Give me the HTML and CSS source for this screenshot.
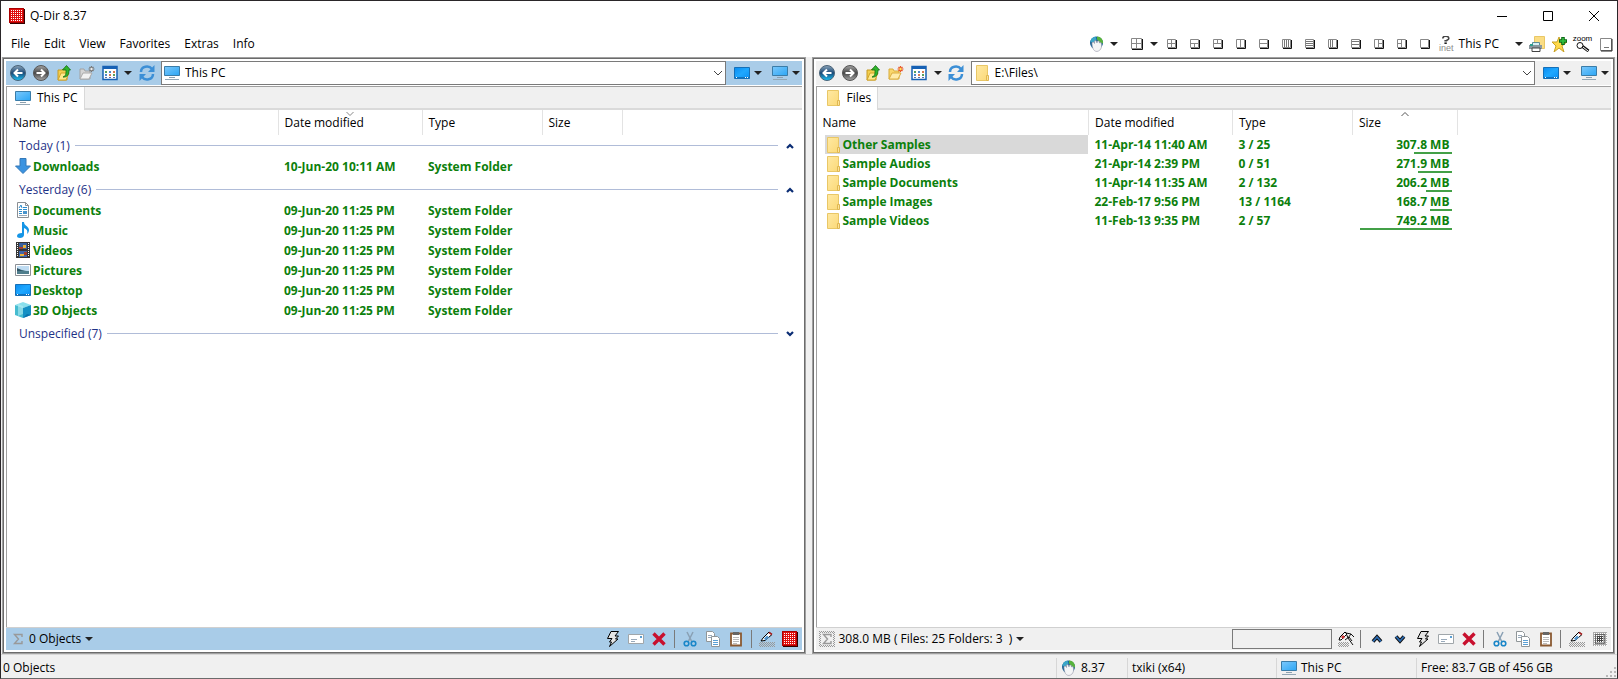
FILE: index.html
```html
<!DOCTYPE html>
<html lang="en">
<head>
	<meta charset="utf-8">
	<title>Q-Dir 8.37</title>
	<meta name="viewport" content="width=device-width, initial-scale=1.0">
	<link rel="stylesheet" href="styles.css">
</head>
<body>

<!-- icon sprite -->
<svg class="sprite" aria-hidden="true">
	<defs>
		<linearGradient id="g-blue" x1="0" y1="0" x2="1" y2="1">
			<stop offset="0" stop-color="#7cc8fb"/><stop offset="1" stop-color="#2ba6f5"/>
		</linearGradient>
		<linearGradient id="g-desk" x1="0" y1="0" x2="1" y2="1">
			<stop offset="0" stop-color="#0a8cf0"/><stop offset="0.5" stop-color="#1fa8ff"/><stop offset="1" stop-color="#0a90f5"/>
		</linearGradient>
		<linearGradient id="g-folder" x1="0" y1="0" x2="1" y2="1">
			<stop offset="0" stop-color="#ffe9a3"/><stop offset="1" stop-color="#fbd978"/>
		</linearGradient>
		<linearGradient id="g-back" x1="0" y1="0" x2="0" y2="1">
			<stop offset="0" stop-color="#8ba3b8"/><stop offset="0.5" stop-color="#1a4a78"/><stop offset="1" stop-color="#19c4f8"/>
		</linearGradient>
		<linearGradient id="g-fwd" x1="0" y1="0" x2="0" y2="1">
			<stop offset="0" stop-color="#a5a5a5"/><stop offset="0.5" stop-color="#484848"/><stop offset="1" stop-color="#a8a8a8"/>
		</linearGradient>
		<pattern id="p-dots" width="2" height="2" patternUnits="userSpaceOnUse">
			<rect width="1" height="1" fill="#fff"/>
		</pattern>
		<pattern id="p-gray" width="2" height="2" patternUnits="userSpaceOnUse">
			<rect width="1" height="1" fill="#999"/><rect x="1" y="1" width="1" height="1" fill="#999"/>
		</pattern>
	</defs>

	<symbol id="i-app" viewBox="0 0 16 16">
		<path d="M1 1h15v15H1z" fill="#300"/><path d="M0 0h15v15H0z" fill="#e00f0f"/>
		<path d="M.5.5h14v14H.5z" fill="none" stroke="#a00"/>
		<path d="M2 2.500h11M2 12.500h11M2.500 2v11M12.500 2v11" stroke="#fff" stroke-dasharray="1 1"/>
		<path d="M4 4h7v7H4z" fill="url(#p-dots)"/>
	</symbol>
	<symbol id="i-appgray" viewBox="0 0 16 16">
		<path d="M1 1h14v14H1z" fill="#aaa"/>
		<path d="M1 1h14v14H1z" fill="url(#p-dots)"/>
		<path d="M3.500 3.500h9v9h-9z" fill="none" stroke="#222" stroke-dasharray="1 1"/>
		<path d="M5 5h6v6H5z" fill="#444"/><path d="M5 5h6v6H5z" fill="url(#p-dots)"/>
	</symbol>
	<symbol id="i-pc" viewBox="0 0 16 16">
		<path d="M.5 1.500h15v9H.5z" fill="url(#g-blue)" stroke="#3a7ca8"/>
		<path d="M5 12.500h6" stroke="#8da0ae"/><path d="M1 14.500h14" stroke="#93a7b5"/>
	</symbol>
	<symbol id="i-desktop" viewBox="0 0 16 16">
		<path d="M.5 2.500h15v11H.5z" fill="url(#g-desk)" stroke="#1570b8"/>
		<path d="M1 12h14v1H1z" fill="#1173bd"/><path d="M2 12.500h1M11 12.500h1M13 12.500h1" stroke="#fff"/>
	</symbol>
	<symbol id="i-folder" viewBox="0 0 16 16">
		<path d="M2.500.5h11v15h-11z" fill="url(#g-folder)" stroke="#e9c766"/>
		<path d="M12.500 10.500h2v5h-2z" fill="#fde398" stroke="#dfb751"/>
	</symbol>
	<symbol id="i-back" viewBox="0 0 16 16">
		<circle cx="8" cy="8" r="7.500" fill="url(#g-back)" stroke="#4a6378"/>
		<path d="M12.500 8H5M8 4.500 4.500 8 8 11.500" fill="none" stroke="#fff" stroke-width="2"/>
	</symbol>
	<symbol id="i-fwd" viewBox="0 0 16 16">
		<circle cx="8" cy="8" r="7.500" fill="url(#g-fwd)" stroke="#555"/>
		<path d="M3.500 8H11M8 4.500 11.500 8 8 11.500" fill="none" stroke="#fff" stroke-width="2"/>
	</symbol>
	<symbol id="i-up" viewBox="0 0 16 16">
		<path d="M2 5h4l1-1h4v11H2z" fill="#f3cf4f" stroke="#c79a22"/>
		<path d="m2 15 3-7h8l-3 7z" fill="#ffe98c" stroke="#d2a52c"/>
		<path d="M7 12c3-1 3-3 3-7H6.500l4-4.500 4 4.500H13c0 5-2 7.500-6 7z" fill="#2fb52c" stroke="#126b12" stroke-width=".8"/>
	</symbol>
	<symbol id="i-newfolder" viewBox="0 0 16 16">
		<path d="M1 14V4h4l1 2h5v8z" fill="#f9d66c" stroke="#d9ac3b"/>
		<path d="m1 14 3-6h9l-3 6z" fill="#ffebaa" stroke="#dcae40"/>
		<path d="M12.500 1v6M9.500 4h6M10.500 2l4 4M14.500 2l-4 4" stroke="#e8532a" stroke-width="1.200"/><circle cx="12.500" cy="4" r="1.200" fill="#ffe25a"/>
	</symbol>
	<symbol id="i-newfolder-off" viewBox="0 0 16 16">
		<path d="M1 14V4h4l1 2h5v8z" fill="#d4d4d4" stroke="#a2a2a2"/>
		<path d="m1 14 3-6h9l-3 6z" fill="#f2f2f2" stroke="#aaa"/>
		<path d="M12.500 1v6M9.500 4h6M10.500 2l4 4M14.500 2l-4 4" stroke="#777" stroke-width="1.200"/><circle cx="12.500" cy="4" r="1.200" fill="#eee"/>
	</symbol>
	<symbol id="i-views" viewBox="0 0 16 16">
		<path d="M1 1.500h14v13H1z" fill="#fff" stroke="#1761b4" stroke-width="1.500"/><path d="M1 1h14v3H1z" fill="#1761b4"/>
		<path d="M3 6h2v2H3zM11 9h2v2h-2z" fill="#58a05c"/><path d="M7 6h2v2H7zM3 9h2v2H3z" fill="#4e8ac9"/><path d="M11 6h2v2h-2zM7 9h2v2H7z" fill="#d77a50"/><path d="M3 12h2v1H3zM7 12h2v1H7zM11 12h2v1h-2z" fill="#5b6ea8"/>
	</symbol>
	<symbol id="i-refresh" viewBox="0 0 16 16">
		<path d="M2 7c0-6 8-7 11-3" fill="none" stroke="#3c8fd6" stroke-width="2.500"/><path d="M15.500 0v7H9z" fill="#3c8fd6"/>
		<path d="M14 9c0 6-8 7-11 3" fill="none" stroke="#3c8fd6" stroke-width="2.500"/><path d="M.5 16V9H7z" fill="#3c8fd6"/>
	</symbol>
	<symbol id="i-caret" viewBox="0 0 8 8"><path d="M0 2h8L4 6z" fill="#222"/></symbol>
	<symbol id="i-chev" viewBox="0 0 8 8"><path d="m0 2 4 4 4-4" fill="none" stroke="#444"/></symbol>
	<symbol id="i-sortup" viewBox="0 0 8 4"><path d="m.5 4 3.500-3.500L7.500 4" fill="none" stroke="#555"/></symbol>
	<symbol id="i-sortdown" viewBox="0 0 8 4"><path d="M.5 0 4 3.500 7.500 0" fill="none" stroke="#888"/></symbol>
	<symbol id="i-collapse" viewBox="0 0 8 8"><path d="M1 6 4 3l3 3" fill="none" stroke="#0b2d74" stroke-width="2.200"/></symbol>
	<symbol id="i-expand" viewBox="0 0 8 8"><path d="m1 2 3 3 3-3" fill="none" stroke="#0b2d74" stroke-width="2.200"/></symbol>
	<symbol id="i-prev" viewBox="0 0 16 16"><path d="M4 10.500 8 6l4 4.500" fill="none" stroke="#111" stroke-width="3.600"/><path d="M4 10.500 8 6l4 4.500" fill="none" stroke="#2b6cb4" stroke-width="1.800"/></symbol>
	<symbol id="i-next" viewBox="0 0 16 16"><path d="M4 5.500 8 10l4-4.500" fill="none" stroke="#111" stroke-width="3.600"/><path d="M4 5.500 8 10l4-4.500" fill="none" stroke="#2b6cb4" stroke-width="1.800"/></symbol>

	<symbol id="i-download" viewBox="0 0 16 16"><path d="M5 .5h6V8h4.500L8 15.500.5 8H5z" fill="#3b93e0" stroke="#3479b8"/></symbol>
	<symbol id="i-doc" viewBox="0 0 16 16">
		<path d="M2.500.5h8l3 3v12h-11z" fill="#fff" stroke="#8a8f94"/><path d="M10.500.5v3h3" fill="none" stroke="#8a8f94"/>
		<path d="m4 6 2-3 1 3M4 7.500h3M8 5.500h4M8 7.500h4M4 9.500h3M4 11.500h3" fill="none" stroke="#2d8ccd"/><path d="M8 9h4v3H8z" fill="#4894cc"/><path d="M4 13.500h8" stroke="#9ab"/>
	</symbol>
	<symbol id="i-music" viewBox="0 0 16 16"><path d="M7 0h2c0 4 5 4 5 8 0 2-1 3-2 4 1-3 0-5-3-6v7c0 2-2 3-4 3s-3-1-3-2c0-2 2-3 5-3z" fill="#1595e6"/></symbol>
	<symbol id="i-video" viewBox="0 0 16 16">
		<path d="M1 0h14v16H1z" fill="#363636"/><path d="M2.500 1v14M13.500 1v14" stroke="#fff" stroke-dasharray="1 1"/>
		<path d="M4 1h8v6H4z" fill="#3a5f9c"/><path d="M4 9h8v6H4z" fill="#3c66ab"/><path d="M8 3h3v3H8zM5 12h4v2H5z" fill="#e8b33c"/><path d="M4 5h4v2H4zM9 10h3v3H9z" fill="#a33d2e"/>
	</symbol>
	<symbol id="i-picture" viewBox="0 0 16 16">
		<path d="M.5 2.500h15v11H.5z" fill="#fff" stroke="#8b9096"/><path d="M2 4h12v8H2z" fill="#bfdcf2"/><path d="M2 7c4 0 6 2 12 2v3H2z" fill="#4f7d8c"/><path d="M2 6c3 1 5 3 7 3H2z" fill="#2f5566"/>
	</symbol>
	<symbol id="i-cube" viewBox="0 0 16 16">
		<path d="m0 3 8-3 8 3-8 3z" fill="#8adfec"/><path d="M0 3v10l8 3V6z" fill="#46bcd0"/><path d="M16 3v10l-8 3V6z" fill="#1590c4"/><path d="m3 2 5 2v8l-5 2z" fill="#b4ecf4" opacity=".6"/><path d="m8 16 4-4 4 1z" fill="#0870ac"/>
	</symbol>

	<symbol id="i-globe" viewBox="0 0 16 16">
		<circle cx="7.500" cy="7" r="6.500" fill="#1d6396"/><path d="M8 .5c4 0 6.500 3.500 6 7l-3-1-3-3z" fill="#57b23c"/><path d="M1.500 6c0-3 2-5 5-5.500l1 3-3 3z" fill="#3aa6c8"/>
		<path d="M3 6.500 4.500 6l1 1.500V5L7 4.500 8 7l.5-2L10 5l.5 2L12 6.500c1 3 1 8-4 9-4 0-5-5-5-9z" fill="#f4f5f6" stroke="#99a" stroke-width=".6"/>
	</symbol>
	<symbol id="i-question" viewBox="0 0 10 10">
		<path d="M1 3c0-3.500 7.500-3.500 7.500 0 0 2-3 2-3 3H3" fill="none" stroke="#444" stroke-width="2"/><path d="M3 8h3v2H3z" fill="#222"/>
	</symbol>
	<symbol id="i-printer" viewBox="0 0 16 16">
		<path d="M5.500.5h10v12h-10z" fill="#fbdd83" stroke="#e9c766"/><path d="M3.500 6.500h7v4h-7z" fill="#d8f0f2" stroke="#5d8d96"/><path d="M0 9h13v4H0z" fill="#8b979e"/><path d="M3 12h8v3.500H3z" fill="#fff" stroke="#444"/><path d="M1 8h3v2H1z" fill="#2d9c8e"/>
	</symbol>
	<symbol id="i-star" viewBox="0 0 16 16">
		<path d="m7 1 2 5h6l-5 4 2 6-5-4-5 4 2-6-4-4h5z" fill="#ffd94a" stroke="#c9a227"/><path d="M11 1v8M7 5h8" stroke="#0e6b18" stroke-width="3.600"/><path d="M11 2v6M8 5h6" stroke="#35c23f" stroke-width="1.600"/>
	</symbol>
	<symbol id="i-lens" viewBox="0 0 14 10">
		<circle cx="4" cy="3.500" r="3" fill="#fff" stroke="#111"/><path d="m6.500 4.500 6 4.500" stroke="#111" stroke-width="3"/><path d="m7 5 5 4" stroke="#fff"/>
	</symbol>
	<symbol id="i-tray" viewBox="0 0 16 16"><path d="M2.500 2.500h11v12h-11z" fill="#fff" stroke="#888"/><path d="M3 15h11V3" fill="none" stroke="#222"/><path d="M6 11.500h5" stroke="#777"/></symbol>

	<!-- pane layouts -->
	<symbol id="l-box" viewBox="0 0 12 12"><path d="M1.500 1.500h8v8h-8z" fill="#fff" stroke="#888"/><path d="M2 10.500h8.500V2" fill="none" stroke="#111"/></symbol>
	<symbol id="l-4" viewBox="0 0 12 12"><use href="#l-box"/><path d="M5.500 2v7M2 5.500h7" stroke="#888"/></symbol>
	<symbol id="l-4big" viewBox="0 0 14 14"><path d="M1.500 1.500h10v10h-10zM6.500 2v9M2 6.500h9" fill="#fff" stroke="#888"/><path d="M2 12.500h10.500V2" fill="none" stroke="#111"/></symbol>
	<symbol id="l-3b" viewBox="0 0 12 12"><use href="#l-box"/><path d="M2 5.500h7M5.500 6v3" stroke="#888"/></symbol>
	<symbol id="l-3t" viewBox="0 0 12 12"><use href="#l-box"/><path d="M2 5.500h7M5.500 2v3" stroke="#888"/></symbol>
	<symbol id="l-2v" viewBox="0 0 12 12"><use href="#l-box"/><path d="M5.500 2v7" stroke="#888"/></symbol>
	<symbol id="l-2h" viewBox="0 0 12 12"><use href="#l-box"/><path d="M2 5.500h7" stroke="#888"/></symbol>
	<symbol id="l-4v" viewBox="0 0 12 12"><use href="#l-box"/><path d="M3.500 2v7M5.500 2v7M7.500 2v7" stroke="#777"/></symbol>
	<symbol id="l-4h" viewBox="0 0 12 12"><use href="#l-box"/><path d="M2 3.500h7M2 5.500h7M2 7.500h7" stroke="#777"/></symbol>
	<symbol id="l-3v" viewBox="0 0 12 12"><use href="#l-box"/><path d="M3.500 2v7M5.500 2v7" stroke="#777"/></symbol>
	<symbol id="l-3h" viewBox="0 0 12 12"><use href="#l-box"/><path d="M2 3.500h7M2 6.500h7" stroke="#777"/></symbol>
	<symbol id="l-3r" viewBox="0 0 12 12"><use href="#l-box"/><path d="M5.500 2v7M6 5.500h3" stroke="#888"/></symbol>
	<symbol id="l-3l" viewBox="0 0 12 12"><use href="#l-box"/><path d="M5.500 2v7M2 5.500h3" stroke="#888"/></symbol>

	<!-- pane footer -->
	<symbol id="i-flash" viewBox="0 0 16 16"><path d="M6 .5h7.500L10 5h3.500l-3 3H13l-8.500 7.500L6.500 11H4.500L7 7.500H2.500z" fill="#e4e4e4" stroke="#000"/></symbol>
	<symbol id="i-mail" viewBox="0 0 16 16"><path d="M.5 3.500h15v9H.5z" fill="#fff" stroke="#a0a6aa"/><path d="M3 8.500h6M3 10.500h4" stroke="#9ab"/><path d="M12 5h2v2h-2z" fill="#5a9fd4"/></symbol>
	<symbol id="i-del" viewBox="0 0 16 16"><path d="m2.500 2.500 11 11M13.500 2.500l-11 11" stroke="#c8102e" stroke-width="3.400"/></symbol>
	<symbol id="i-cut" viewBox="0 0 16 16"><path d="m5 1 5 10M11 1 6 11" stroke="#8aa0b4" stroke-width="1.500"/><circle cx="4.500" cy="12.500" r="2.300" fill="none" stroke="#1a86c8" stroke-width="1.600"/><circle cx="11.500" cy="12.500" r="2.300" fill="none" stroke="#1a86c8" stroke-width="1.600"/></symbol>
	<symbol id="i-copy" viewBox="0 0 16 16"><path d="M1.500.5h6l2 2v8h-8z" fill="#fff" stroke="#909699"/><path d="M3 4.500h4M3 6.500h4" stroke="#9ab"/><path d="M6.500 5.500h6l2 2v8h-8z" fill="#fff" stroke="#909699"/><path d="M8 9.500h5M8 11.500h5M8 13.500h5" stroke="#5a9fd4"/></symbol>
	<symbol id="i-paste" viewBox="0 0 16 16"><path d="M3 2.500h10v12H3z" fill="#fff" stroke="#8a5a32" stroke-width="1.800"/><path d="M5 1h6v3H5z" fill="#666"/><path d="M5 6.500h6M5 8.500h6M5 10.500h6M5 12.500h4" stroke="#bbb"/></symbol>
	<symbol id="i-pen" viewBox="0 0 16 16"><path d="M0 11h16v5H0z" fill="url(#p-gray)"/><path d="m2 10 2-3 6-6 3 2.500-7 6z" fill="#fff" stroke="#000"/><path d="m5 7.500 3-3 2 2-3.500 3z" fill="#4f93cc"/><path d="m10 1.500 3 2" stroke="#a22" stroke-width="1.600"/></symbol>
	<symbol id="i-pens" viewBox="0 0 16 16"><path d="M0 11h11v5H0z" fill="url(#p-gray)"/><path d="m1 9 1-3 5-5 2 2-6 6z" fill="#fff" stroke="#000"/><path d="m3 6 2-2 2 2-2 2z" fill="#c33"/><path d="m8 2 5 1-3 4zM10 7l5 7M7 9l4-3 3 4M13 3l3 3" fill="none" stroke="#111"/></symbol>
	<symbol id="i-sigma" viewBox="0 0 16 16"><path d="M12 6V3.500H4.500L8.500 8l-4 4.500H12V10" fill="none" stroke="#999" stroke-width="1.400"/></symbol>
	<symbol id="i-sigmabox" viewBox="0 0 16 16"><path d="M1 1h14v14H1z" fill="none" stroke="url(#p-gray)" stroke-width="2"/><use href="#i-sigma"/></symbol>
</svg>

<div class="window">
	<header class="titlebar">
		<svg class="icon titlebar__icon"><use href="#i-app"/></svg>
		<h1 class="titlebar__title">Q-Dir 8.37</h1>
		<button class="winbtn" aria-label="Minimize"><svg width="10" height="10"><path d="M0 5.500h10" stroke="#000"/></svg></button>
		<button class="winbtn" aria-label="Maximize"><svg width="10" height="10"><path d="M.5.5h9v9h-9z" fill="none" stroke="#000"/></svg></button>
		<button class="winbtn" aria-label="Close"><svg width="10" height="10"><path d="m0 0 10 10M10 0 0 10" stroke="#000"/></svg></button>
	</header>

	<div class="menubar">
		<nav class="menu">
			<button class="menu__item">File</button>
			<button class="menu__item">Edit</button>
			<button class="menu__item">View</button>
			<button class="menu__item">Favorites</button>
			<button class="menu__item">Extras</button>
			<button class="menu__item">Info</button>
		</nav>
		<div class="quickbar">
			<button class="tool" aria-label="Language"><svg class="icon"><use href="#i-globe"/></svg></button>
			<button class="drop" aria-label="Language list"><svg class="caret"><use href="#i-caret"/></svg></button>
			<button class="tool tool--big" aria-label="Layout"><svg class="layout--big"><use href="#l-4big"/></svg></button>
			<button class="drop" aria-label="Layout list"><svg class="caret"><use href="#i-caret"/></svg></button>
			<button class="tool" aria-label="Four panes"><svg class="layout"><use href="#l-4"/></svg></button>
			<button class="tool" aria-label="Three panes, split bottom"><svg class="layout"><use href="#l-3b"/></svg></button>
			<button class="tool" aria-label="Three panes, split top"><svg class="layout"><use href="#l-3t"/></svg></button>
			<button class="tool" aria-label="Two columns"><svg class="layout"><use href="#l-2v"/></svg></button>
			<button class="tool" aria-label="Two rows"><svg class="layout"><use href="#l-2h"/></svg></button>
			<button class="tool" aria-label="Four columns"><svg class="layout"><use href="#l-4v"/></svg></button>
			<button class="tool" aria-label="Four rows"><svg class="layout"><use href="#l-4h"/></svg></button>
			<button class="tool" aria-label="Three columns"><svg class="layout"><use href="#l-3v"/></svg></button>
			<button class="tool" aria-label="Three rows"><svg class="layout"><use href="#l-3h"/></svg></button>
			<button class="tool" aria-label="Three panes, split right"><svg class="layout"><use href="#l-3r"/></svg></button>
			<button class="tool" aria-label="Three panes, split left"><svg class="layout"><use href="#l-3l"/></svg></button>
			<button class="tool" aria-label="One pane"><svg class="layout"><use href="#l-box"/></svg></button>
			<button class="tool tool--text"><span class="stack stack--inet"><svg width="10" height="8"><use href="#i-question"/></svg>inet</span>This PC</button>
			<button class="drop" aria-label="Places"><svg class="caret"><use href="#i-caret"/></svg></button>
			<button class="tool" aria-label="Print"><svg class="icon"><use href="#i-printer"/></svg></button>
			<button class="tool" aria-label="Add favorite"><svg class="icon"><use href="#i-star"/></svg></button>
			<button class="tool"><span class="stack stack--zoom">zoom<svg width="14" height="10"><use href="#i-lens"/></svg></span></button>
			<button class="tool" aria-label="To tray"><svg class="icon"><use href="#i-tray"/></svg></button>
		</div>
	</div>

	<main class="panes">
		<!-- left pane -->
		<section class="pane pane--active">
			<div class="pane__bar">
				<button class="tool" aria-label="Back"><svg class="icon"><use href="#i-back"/></svg></button>
				<button class="tool" aria-label="Forward"><svg class="icon"><use href="#i-fwd"/></svg></button>
				<button class="tool" aria-label="Up"><svg class="icon"><use href="#i-up"/></svg></button>
				<button class="tool" aria-label="New folder" disabled><svg class="icon"><use href="#i-newfolder-off"/></svg></button>
				<button class="tool" aria-label="Views"><svg class="icon"><use href="#i-views"/></svg></button>
				<button class="drop drop--views" aria-label="View list"><svg class="caret"><use href="#i-caret"/></svg></button>
				<button class="tool" aria-label="Refresh"><svg class="icon"><use href="#i-refresh"/></svg></button>
				<div class="address">
					<svg class="icon"><use href="#i-pc"/></svg>
					<input class="address__field" type="text" value="This PC" aria-label="Address">
					<button class="drop" aria-label="Address history"><svg class="caret"><use href="#i-chev"/></svg></button>
				</div>
				<div class="places">
					<button class="place" aria-label="Desktop"><svg class="icon"><use href="#i-desktop"/></svg><svg class="caret"><use href="#i-caret"/></svg></button>
					<button class="place" aria-label="Computer"><svg class="icon"><use href="#i-pc"/></svg><svg class="caret"><use href="#i-caret"/></svg></button>
				</div>
			</div>
			<div class="pane__body">
				<div class="tabs"><button class="tab"><svg class="icon"><use href="#i-pc"/></svg>This PC</button></div>
				<table class="files files--grouped">
					<colgroup><col class="col-name"><col class="col-date"><col class="col-type"><col class="col-size-sm"><col></colgroup>
					<thead>
						<tr>
							<th>Name</th>
							<th>Date modified<svg class="sort"><use href="#i-sortdown"/></svg></th>
							<th>Type</th>
							<th>Size</th>
							<td></td>
						</tr>
					</thead>
					<tbody>
						<tr class="group"><th colspan="5"><div class="group__head">Today (1)<span class="group__line"></span><button class="drop" aria-label="Collapse"><svg class="caret"><use href="#i-collapse"/></svg></button></div></th></tr>
						<tr><td><div class="file"><svg class="icon"><use href="#i-download"/></svg>Downloads</div></td><td>10-Jun-20 10:11 AM</td><td>System Folder</td><td></td><td></td></tr>
					</tbody>
					<tbody>
						<tr class="group"><th colspan="5"><div class="group__head">Yesterday (6)<span class="group__line"></span><button class="drop" aria-label="Collapse"><svg class="caret"><use href="#i-collapse"/></svg></button></div></th></tr>
						<tr><td><div class="file"><svg class="icon"><use href="#i-doc"/></svg>Documents</div></td><td>09-Jun-20 11:25 PM</td><td>System Folder</td><td></td><td></td></tr>
						<tr><td><div class="file"><svg class="icon"><use href="#i-music"/></svg>Music</div></td><td>09-Jun-20 11:25 PM</td><td>System Folder</td><td></td><td></td></tr>
						<tr><td><div class="file"><svg class="icon"><use href="#i-video"/></svg>Videos</div></td><td>09-Jun-20 11:25 PM</td><td>System Folder</td><td></td><td></td></tr>
						<tr><td><div class="file"><svg class="icon"><use href="#i-picture"/></svg>Pictures</div></td><td>09-Jun-20 11:25 PM</td><td>System Folder</td><td></td><td></td></tr>
						<tr><td><div class="file"><svg class="icon"><use href="#i-desktop"/></svg>Desktop</div></td><td>09-Jun-20 11:25 PM</td><td>System Folder</td><td></td><td></td></tr>
						<tr><td><div class="file"><svg class="icon"><use href="#i-cube"/></svg>3D Objects</div></td><td>09-Jun-20 11:25 PM</td><td>System Folder</td><td></td><td></td></tr>
					</tbody>
					<tbody>
						<tr class="group"><th colspan="5"><div class="group__head">Unspecified (7)<span class="group__line"></span><button class="drop" aria-label="Expand"><svg class="caret"><use href="#i-expand"/></svg></button></div></th></tr>
					</tbody>
				</table>
			</div>
			<div class="pane__foot">
				<button class="tool" aria-label="Sum"><svg class="icon"><use href="#i-sigma"/></svg></button>
				<button class="summary">0 Objects<svg class="caret"><use href="#i-caret"/></svg></button>
				<button class="tool" aria-label="Quick actions"><svg class="icon"><use href="#i-flash"/></svg></button>
				<button class="tool" aria-label="Mail"><svg class="icon"><use href="#i-mail"/></svg></button>
				<button class="tool" aria-label="Delete"><svg class="icon"><use href="#i-del"/></svg></button>
				<span class="sep"></span>
				<button class="tool" aria-label="Cut"><svg class="icon"><use href="#i-cut"/></svg></button>
				<button class="tool" aria-label="Copy"><svg class="icon"><use href="#i-copy"/></svg></button>
				<button class="tool" aria-label="Paste"><svg class="icon"><use href="#i-paste"/></svg></button>
				<span class="sep"></span>
				<button class="tool" aria-label="Rename"><svg class="icon"><use href="#i-pen"/></svg></button>
				<button class="tool" aria-label="Select pane"><svg class="icon"><use href="#i-app"/></svg></button>
			</div>
		</section>

		<!-- right pane -->
		<section class="pane">
			<div class="pane__bar">
				<button class="tool" aria-label="Back"><svg class="icon"><use href="#i-back"/></svg></button>
				<button class="tool" aria-label="Forward"><svg class="icon"><use href="#i-fwd"/></svg></button>
				<button class="tool" aria-label="Up"><svg class="icon"><use href="#i-up"/></svg></button>
				<button class="tool" aria-label="New folder"><svg class="icon"><use href="#i-newfolder"/></svg></button>
				<button class="tool" aria-label="Views"><svg class="icon"><use href="#i-views"/></svg></button>
				<button class="drop drop--views" aria-label="View list"><svg class="caret"><use href="#i-caret"/></svg></button>
				<button class="tool" aria-label="Refresh"><svg class="icon"><use href="#i-refresh"/></svg></button>
				<div class="address">
					<svg class="icon"><use href="#i-folder"/></svg>
					<input class="address__field" type="text" value="E:\Files\" aria-label="Address">
					<button class="drop" aria-label="Address history"><svg class="caret"><use href="#i-chev"/></svg></button>
				</div>
				<div class="places">
					<button class="place" aria-label="Desktop"><svg class="icon"><use href="#i-desktop"/></svg><svg class="caret"><use href="#i-caret"/></svg></button>
					<button class="place" aria-label="Computer"><svg class="icon"><use href="#i-pc"/></svg><svg class="caret"><use href="#i-caret"/></svg></button>
				</div>
			</div>
			<div class="pane__body">
				<div class="tabs"><button class="tab"><svg class="icon"><use href="#i-folder"/></svg>Files</button></div>
				<table class="files">
					<colgroup><col class="col-name"><col class="col-date"><col class="col-type"><col class="col-size"><col></colgroup>
					<thead>
						<tr>
							<th>Name</th>
							<th>Date modified</th>
							<th>Type</th>
							<th>Size<svg class="sort"><use href="#i-sortup"/></svg></th>
							<td></td>
						</tr>
					</thead>
					<tbody>
						<tr><td><div class="file file--selected"><svg class="icon"><use href="#i-folder"/></svg>Other Samples</div></td><td>11-Apr-14 11:40 AM</td><td>3 / 25</td><td class="size">307.8 MB<span class="size__bar" style="width: 41%"></span></td><td></td></tr>
						<tr><td><div class="file"><svg class="icon"><use href="#i-folder"/></svg>Sample Audios</div></td><td>21-Apr-14 2:39 PM</td><td>0 / 51</td><td class="size">271.9 MB<span class="size__bar" style="width: 36%"></span></td><td></td></tr>
						<tr><td><div class="file"><svg class="icon"><use href="#i-folder"/></svg>Sample Documents</div></td><td>11-Apr-14 11:35 AM</td><td>2 / 132</td><td class="size">206.2 MB<span class="size__bar" style="width: 28%"></span></td><td></td></tr>
						<tr><td><div class="file"><svg class="icon"><use href="#i-folder"/></svg>Sample Images</div></td><td>22-Feb-17 9:56 PM</td><td>13 / 1164</td><td class="size">168.7 MB<span class="size__bar" style="width: 23%"></span></td><td></td></tr>
						<tr><td><div class="file"><svg class="icon"><use href="#i-folder"/></svg>Sample Videos</div></td><td>11-Feb-13 9:35 PM</td><td>2 / 57</td><td class="size">749.2 MB<span class="size__bar" style="width: 100%"></span></td><td></td></tr>
					</tbody>
				</table>
			</div>
			<div class="pane__foot">
				<button class="tool" aria-label="Sum"><svg class="icon"><use href="#i-sigmabox"/></svg></button>
				<button class="summary">308.0 MB ( Files: 25 Folders: 3&nbsp; )<svg class="caret"><use href="#i-caret"/></svg></button>
				<input class="filter" type="text" aria-label="Filter">
				<button class="tool" aria-label="Highlight"><svg class="icon"><use href="#i-pens"/></svg></button>
				<span class="sep"></span>
				<button class="tool" aria-label="Previous"><svg class="icon"><use href="#i-prev"/></svg></button>
				<button class="tool" aria-label="Next"><svg class="icon"><use href="#i-next"/></svg></button>
				<button class="tool" aria-label="Quick actions"><svg class="icon"><use href="#i-flash"/></svg></button>
				<button class="tool" aria-label="Mail"><svg class="icon"><use href="#i-mail"/></svg></button>
				<button class="tool" aria-label="Delete"><svg class="icon"><use href="#i-del"/></svg></button>
				<span class="sep"></span>
				<button class="tool" aria-label="Cut"><svg class="icon"><use href="#i-cut"/></svg></button>
				<button class="tool" aria-label="Copy"><svg class="icon"><use href="#i-copy"/></svg></button>
				<button class="tool" aria-label="Paste"><svg class="icon"><use href="#i-paste"/></svg></button>
				<span class="sep"></span>
				<button class="tool" aria-label="Rename"><svg class="icon"><use href="#i-pen"/></svg></button>
				<button class="tool" aria-label="Select pane"><svg class="icon"><use href="#i-appgray"/></svg></button>
			</div>
		</section>
	</main>

	<footer class="status">
		<span class="status__main">0 Objects</span>
		<span class="status__cell status__cell--version"><svg class="icon"><use href="#i-globe"/></svg>8.37</span>
		<span class="status__cell status__cell--user">txiki (x64)</span>
		<span class="status__cell status__cell--place"><svg class="icon"><use href="#i-pc"/></svg>This PC</span>
		<span class="status__cell status__cell--free">Free: 83.7 GB of 456 GB</span>
		<svg class="grip" width="12" height="12"><path d="M9 1h2v2H9zM5 5h2v2H5zM9 5h2v2H9zM1 9h2v2H1zM5 9h2v2H5zM9 9h2v2H9z" fill="#b8b8b8"/></svg>
	</footer>
</div>

</body>
</html>
```

FILE: styles.css
```css
* {
	box-sizing: border-box;
}
body {
	margin: 0;
	font: 12px/16px "Open Sans", "Noto Sans", sans-serif;
	color: #000;
}
button,
input {
	margin: 0;
	padding: 0;
	border: none;
	background: transparent;
	font: inherit;
	color: inherit;
}
svg {
	display: block;
	flex: none;
}
.sprite {
	position: absolute;
	width: 0;
	height: 0;
}
.icon {
	width: 16px;
	height: 16px;
}
.caret {
	width: 8px;
	height: 8px;
}

/* window */
.window {
	display: flex;
	flex-direction: column;
	min-height: 100vh;
	border: 1px solid #2a2629;
	border-bottom-color: #6b6b6b;
	background: #f0f0f0;
}
.titlebar {
	display: flex;
	align-items: center;
	height: 29px;
	padding-left: 8px;
	background: #fff;
}
.titlebar__title {
	flex: 1;
	margin: 0 0 0 5px;
	font-size: 12px;
	font-weight: normal;
}
.winbtn {
	display: flex;
	align-items: center;
	justify-content: center;
	width: 46px;
	height: 28px;
}
.menubar {
	display: flex;
	justify-content: space-between;
	height: 27px;
	background: #fff;
}
.menu {
	display: flex;
	padding-left: 3px;
}
.menu__item {
	padding: 0 7px;
}
.quickbar {
	display: flex;
	align-items: center;
}

/* buttons shared by all bars */
.tool {
	display: flex;
	align-items: center;
	justify-content: center;
	flex: none;
	width: 23px;
	height: 22px;
}
.tool--big {
	margin-left: 5px;
}
.tool--text {
	gap: 5px;
	width: 77px;
	justify-content: flex-start;
	padding-left: 3px;
	white-space: nowrap;
}
.layout {
	width: 12px;
	height: 12px;
}
.layout--big {
	width: 14px;
	height: 14px;
}
.stack {
	display: flex;
	flex-direction: column;
	align-items: center;
}
.stack--inet {
	color: #8c8c8c;
	font: 9px/8px "Liberation Sans", sans-serif;
}
.stack--zoom {
	font: 8px/6px "Liberation Sans", sans-serif;
}
.drop {
	display: flex;
	align-items: center;
	justify-content: center;
	flex: none;
	width: 12px;
	height: 22px;
}
.drop--views {
	width: 14px;
}
.sep {
	flex: none;
	width: 1px;
	height: 18px;
	margin: 0 4px 0 3px;
	background: #7a7a7a;
}

/* panes */
.panes {
	display: flex;
	flex: 1;
	gap: 6px;
	padding: 0 2px 0 1px;
}
.pane {
	display: flex;
	flex: 1;
	flex-direction: column;
	min-width: 0;
	padding: 3px;
	border: 1px solid #a0a0a0;
	background: #fff;
	box-shadow: inset 0 0 0 1px #6b6b6b;
}
.pane__bar,
.pane__foot {
	display: flex;
	align-items: center;
	background: #f0f0f0;
}
.pane__bar {
	height: 24px;
}
.pane__foot {
	height: 23px;
	border-top: 1px solid #d0d0d0;
}
.pane--active .pane__bar,
.pane--active .pane__foot {
	background: #a9cce8;
}
.address {
	display: flex;
	align-items: center;
	flex: 1;
	height: 24px;
	margin-left: 3px;
	padding: 0 1px 0 2px;
	border: 1px solid #7a7a7a;
	background: #fff;
}
.address__field {
	flex: 1;
	min-width: 0;
	margin-left: 5px;
}
.places {
	display: flex;
	gap: 10px;
	padding: 0 2px 0 8px;
}
.place {
	display: flex;
	align-items: center;
	gap: 4px;
}
.pane__body {
	flex: 1;
	margin-top: 1px;
	border-top: 1px solid #a0a0a0;
	border-left: 1px solid #a0a0a0;
	background: #fff;
}
.tabs {
	display: flex;
	height: 23px;
	border-bottom: 2px solid #dadada;
	background: #f0f0f0;
}
.tab {
	display: flex;
	align-items: center;
	gap: 6px;
	height: 23px;
	padding: 0 6px 2px 8px;
	border-right: 1px solid #d9d9d9;
	background: #fff;
}
.summary {
	display: flex;
	align-items: center;
	gap: 4px;
	margin-right: auto;
}
.filter {
	width: 100px;
	height: 20px;
	margin-right: 2px;
	border: 1px solid #7a7a7a;
}

/* file list */
.files {
	width: 100%;
	table-layout: fixed;
	border-collapse: collapse;
	text-align: left;
}
.col-name {
	width: 272px;
}
.files--grouped .col-name {
	width: 271px;
}
.col-date {
	width: 144px;
}
.col-type {
	width: 120px;
}
.col-size {
	width: 105px;
}
.col-size-sm {
	width: 80px;
}
.files th,
.files td {
	padding: 0 0 0 6px;
	white-space: nowrap;
}
.files thead th {
	position: relative;
	height: 25px;
	border-right: 1px solid #e3e3e3;
	font-weight: normal;
}
.sort {
	position: absolute;
	top: 2px;
	left: 50%;
	width: 8px;
	height: 4px;
	margin-left: -4px;
}
.files tbody td {
	height: 19px;
	color: #0c800c;
	font-weight: 700;
	line-height: 19px;
}
.files tbody td:first-child {
	padding: 0 1px 0 8px;
}
.files--grouped tbody td {
	height: 20px;
}
.file {
	display: flex;
	align-items: center;
	gap: 2px;
	height: 19px;
}
.file--selected {
	background: #d9d9d9;
}
.files .size {
	padding: 0 8px 0 5px;
	text-align: right;
}
.size__bar {
	display: block;
	height: 2px;
	margin: -2px -2px 0 auto;
	background: #43a047;
}
.files .group th {
	height: 24px;
	padding: 3px 6px 0 12px;
	color: #1e3287;
	font-weight: normal;
}
.files tbody:nth-of-type(1) .group th {
	height: 21px;
	padding-top: 0;
}
.group__head {
	display: flex;
	align-items: center;
	height: 21px;
}
.group__line {
	flex: 1;
	height: 1px;
	margin: 0 6px 0 5px;
	background: #b0bcd8;
}

/* status bar */
.status {
	display: flex;
	align-items: center;
	height: 24px;
	padding: 2px 0 0 2px;
	border-top: 1px solid #d7d7d7;
}
.status__main {
	flex: 1;
}
.status__cell {
	display: flex;
	align-items: center;
	gap: 4px;
	height: 20px;
	padding-left: 4px;
	border-left: 1px solid #d7d7d7;
}
.status__cell--version {
	width: 71px;
}
.status__cell--user {
	width: 149px;
}
.status__cell--place {
	width: 140px;
}
.status__cell--free {
	width: 189px;
}
.grip {
	align-self: flex-end;
}
```
